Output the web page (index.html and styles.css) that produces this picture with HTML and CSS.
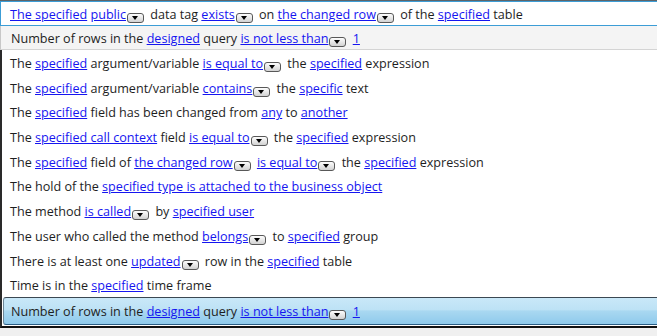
FILE: index.html
```html
<!DOCTYPE html>
<html lang="en">
<head>
    <meta charset="UTF-8">
    <title>Condition picker</title>
    <link rel="stylesheet" href="styles.css">
</head>
<body>
    <div class="window">
        <div class="editor">
            <a class="link">The specified</a> <a class="link">public</a><span class="drop"></span> data tag <a class="link">exists</a><span class="drop"></span> on <a class="link">the changed row</a><span class="drop"></span> of the <a class="link">specified</a> table
        </div>
        <div class="current">
            Number of rows in the <a class="link">designed</a> query <a class="link">is not less than</a><span class="drop"></span> <a class="link">1</a>
        </div>

        <div class="popup">
            <div class="item">The <a class="link">specified</a> argument/variable <a class="link">is equal to</a><span class="drop"></span> the <a class="link">specified</a> expression</div>
            <div class="item">The <a class="link">specified</a> argument/variable <a class="link">contains</a><span class="drop"></span> the <a class="link">specific</a> text</div>
            <div class="item">The <a class="link">specified</a> field has been changed from <a class="link">any</a> to <a class="link">another</a></div>
            <div class="item">The <a class="link">specified call context</a> field <a class="link">is equal to</a><span class="drop"></span> the <a class="link">specified</a> expression</div>
            <div class="item">The <a class="link">specified</a> field of <a class="link">the changed row</a><span class="drop"></span> <a class="link">is equal to</a><span class="drop"></span> the <a class="link">specified</a> expression</div>
            <div class="item">The hold of the <a class="link">specified type is attached to the business object</a></div>
            <div class="item">The method <a class="link">is called</a><span class="drop"></span> by <a class="link">specified user</a></div>
            <div class="item">The user who called the method <a class="link">belongs</a><span class="drop"></span> to <a class="link">specified</a> group</div>
            <div class="item">There is at least one <a class="link">updated</a><span class="drop"></span> row in the <a class="link">specified</a> table</div>
            <div class="item">Time is in the <a class="link">specified</a> time frame</div>
            <div class="item selected">Number of rows in the <a class="link">designed</a> query <a class="link">is not less than</a><span class="drop"></span> <a class="link">1</a></div>
        </div>
    </div>
</body>
</html>
```

FILE: styles.css
```css
body {
    margin: 0;
    background: #f0f0f0;
    font-family: "Open Sans", "Noto Sans", sans-serif;
    font-size: 12.6px;
    color: #1e1e1e;
}

.window {
    width: 657px;
    border-top: 1px solid #5e6468;
}

.editor {
    height: 22px;
    padding-top: 1px;
    line-height: 23px;
    padding-left: 9px;
    background: #fff;
    border: 1px solid #3c9dd6;
    border-right: none;
    white-space: nowrap;
}

.current {
    height: 22px;
    padding-top: 1px;
    line-height: 23px;
    padding-left: 10px;
    background: #f4f4f4;
    border-left: 1px solid #c8c8c8;
    border-bottom: 1px solid #d4d4d4;
    white-space: nowrap;
}

.popup {
    background: #fff;
    border-left: 2px solid #2a2a2a;
    border-bottom: 2px solid #111;
    padding-bottom: 1px;
}

.item {
    box-sizing: border-box;
    height: 24.7px;
    padding-top: 3px;
    line-height: 21px;
    padding-left: 8px;
    white-space: nowrap;
}

.item.selected {
    height: 28px;
    padding-top: 2px;
    line-height: 24px;
    margin-left: 1px;
    padding-left: 7px;
    border-top: 1px solid #3b4852;
    border-bottom: 1px solid #2a5d84;
    border-left: 1px solid #6d8798;
    border-radius: 3px 0 0 3px;
    background: linear-gradient(#c9e8f8 0%, #bde2f5 45%, #a9d8f1 50%, #8fcaec 100%);
}

.link {
    color: #1515f0;
    text-decoration: underline;
}

.drop {
    display: inline-block;
    width: 15px;
    height: 8px;
    margin-left: 1px;
    margin-right: 3px;
    vertical-align: -4px;
    border: 1px solid #585858;
    border-radius: 3px;
    background: linear-gradient(#fdfdfd, #d2d2d2);
    position: relative;
}

.drop::after {
    content: "";
    position: absolute;
    left: 4px;
    top: 2px;
    border-left: 3.5px solid transparent;
    border-right: 3.5px solid transparent;
    border-top: 4px solid #000;
}
```
